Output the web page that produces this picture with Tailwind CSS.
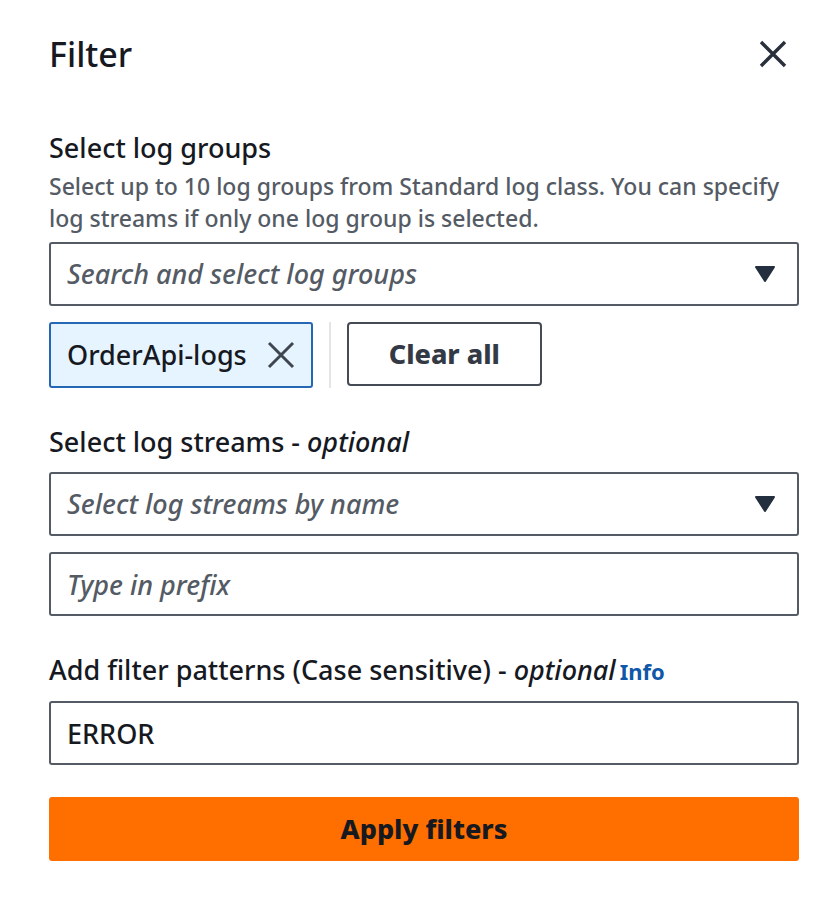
<!DOCTYPE html>
<html lang="en">
<head>
<meta charset="utf-8">
<meta name="viewport" content="width=device-width, initial-scale=1">
<title>Filter</title>
<script src="https://cdn.jsdelivr.net/npm/@tailwindcss/browser@4"></script>
</head>
<body class="bg-white font-['Noto_Sans','Open_Sans',sans-serif] text-[27px] leading-9 font-medium text-[#16191f]">
<form class="flex flex-col pt-9 pr-[41px] pb-9 pl-[49px]">
  <header class="flex items-center justify-between pr-3">
    <h1 class="text-[34px] leading-9">Filter</h1>
    <button type="button" aria-label="Close" class="flex size-7 items-center justify-center">
      <svg class="size-7" viewBox="0 0 28 28" fill="none" stroke="#2a303b" stroke-width="3.4"><path d="M2 2 26 26M26 2 2 26"/></svg>
    </button>
  </header>

  <section class="mt-[58px] flex flex-col">
    <label for="groups">Select log groups</label>
    <p id="groups-help" class="mt-1 text-[23px] leading-8 text-[#545b64]">Select up to 10 log groups from Standard log class. You can specify log streams if only one log group is selected.</p>
    <div class="relative mt-2">
      <select id="groups" aria-describedby="groups-help" class="block h-16 w-full appearance-none rounded-[3px] border-2 border-[#545b64] bg-white pr-16 pl-4 text-[#545b64] italic">
        <option>Search and select log groups</option>
      </select>
      <svg class="pointer-events-none absolute top-6 right-6 h-4 w-5" viewBox="0 0 20 16" fill="#232f3e" stroke="#232f3e" stroke-width="2" stroke-linejoin="round"><path d="M1 1H19L10 15Z"/></svg>
    </div>
    <div class="mt-4 flex items-start gap-4">
      <div class="flex h-[66px] items-center gap-5 rounded-[3px] border-2 border-[#2467b5] bg-[#e6f4ff] px-4">
        <span>OrderApi-logs</span>
        <button type="button" aria-label="Remove OrderApi-logs" class="flex size-7 items-center justify-center">
          <svg class="size-7" viewBox="0 0 28 28" fill="none" stroke="#3f4650" stroke-width="3"><path d="M2 2 26 26M26 2 2 26"/></svg>
        </button>
      </div>
      <div class="h-[66px] w-[2px] bg-[#e3e5e6]"></div>
      <button type="button" class="h-16 rounded-[4px] border-2 border-[#444b55] px-10 font-extrabold text-[#343a45]">Clear all</button>
    </div>
  </section>

  <section class="mt-9 flex flex-col">
    <label for="streams">Select log streams - <i>optional</i></label>
    <div class="relative mt-3">
      <select id="streams" class="block h-16 w-full appearance-none rounded-[3px] border-2 border-[#545b64] bg-white pr-16 pl-4 text-[#545b64] italic">
        <option>Select log streams by name</option>
      </select>
      <svg class="pointer-events-none absolute top-6 right-6 h-4 w-5" viewBox="0 0 20 16" fill="#232f3e" stroke="#232f3e" stroke-width="2" stroke-linejoin="round"><path d="M1 1H19L10 15Z"/></svg>
    </div>
    <input type="text" aria-label="Log stream prefix" placeholder="Type in prefix" class="mt-4 h-16 w-full rounded-[3px] border-2 border-[#545b64] px-4 placeholder:text-[#545b64] placeholder:italic">
  </section>

  <section class="mt-9 flex flex-col">
    <div class="flex items-baseline gap-1">
      <label for="pattern">Add filter patterns (Case sensitive) - <i>optional</i></label>
      <a href="#" class="text-[22px] font-bold text-[#0f57a8]">Info</a>
    </div>
    <input id="pattern" type="text" value="ERROR" class="mt-3 h-16 w-full rounded-[3px] border-2 border-[#545b64] px-4">
  </section>

  <button type="submit" class="mt-8 h-16 w-full rounded-[3px] bg-[#ff6f00] font-extrabold">Apply filters</button>
</form>
</body>
</html>
